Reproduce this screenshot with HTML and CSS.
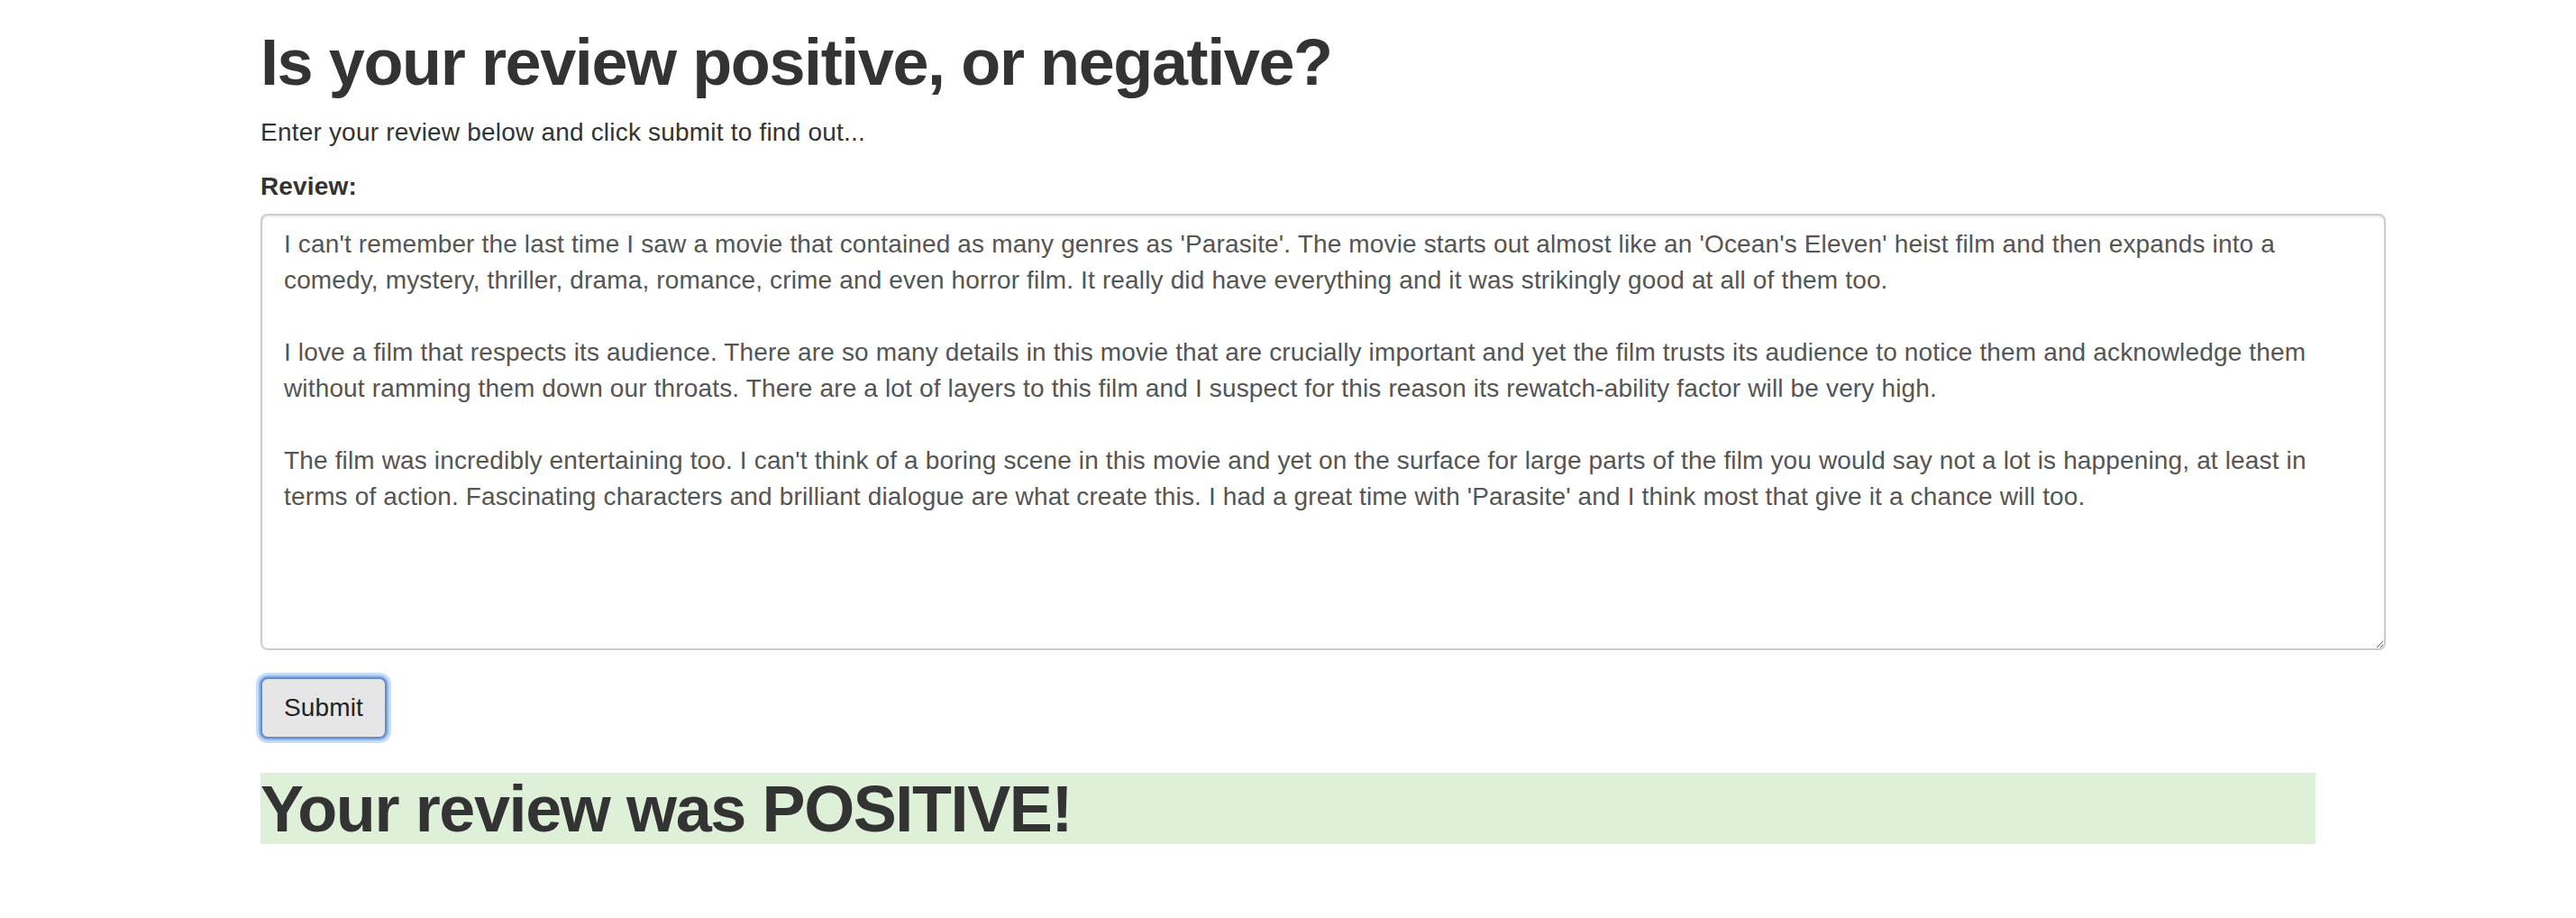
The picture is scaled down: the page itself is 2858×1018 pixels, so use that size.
FILE: index.html
```html
<!DOCTYPE html>
<html lang="en">
<head>
<meta charset="utf-8">
<title>Sentiment Analysis</title>
<link rel="stylesheet" href="styles.css">
</head>
<body>
<div class="container">
  <h1 class="title">Is your review positive, or negative?</h1>
  <p class="intro">Enter your review below and click submit to find out...</p>
  <form class="review-form">
    <div class="form-group">
      <label class="field-label" for="review">Review:</label>
      <textarea class="review-input" id="review" name="review">I can't remember the last time I saw a movie that contained as many genres as 'Parasite'. The movie starts out almost like an 'Ocean's Eleven' heist film and then expands into a
comedy, mystery, thriller, drama, romance, crime and even horror film. It really did have everything and it was strikingly good at all of them too.

I love a film that respects its audience. There are so many details in this movie that are crucially important and yet the film trusts its audience to notice them and acknowledge them
without ramming them down our throats. There are a lot of layers to this film and I suspect for this reason its rewatch-ability factor will be very high.

The film was incredibly entertaining too. I can't think of a boring scene in this movie and yet on the surface for large parts of the film you would say not a lot is happening, at least in
terms of action. Fascinating characters and brilliant dialogue are what create this. I had a great time with 'Parasite' and I think most that give it a chance will too.</textarea>
    </div>
    <button type="button" class="submit-btn">Submit</button>
  </form>
  <h1 class="result">Your review was POSITIVE!</h1>
</div>
</body>
</html>
```
FILE: styles.css
```css
html, body {
  margin: 0;
  padding: 0;
  background: #ffffff;
}

body {
  font-family: "Liberation Sans", Arial, Helvetica, sans-serif;
  font-size: 28px;
  line-height: 40px;
  letter-spacing: 0.15px;
  color: #333333;
}

.container {
  width: 2280px;
  margin: 0 auto;
}

.title {
  margin: 30px 0 18px;
  font-size: 72px;
  line-height: 79px;
  font-weight: bold;
  letter-spacing: -1.4px;
  color: #333333;
}

.intro {
  margin: 0 0 20px;
  letter-spacing: 0.2px;
}

.review-form {
  margin: 0;
}

.form-group {
  margin-bottom: 30px;
}

.field-label {
  display: block;
  font-weight: bold;
  margin-bottom: 10px;
}

.review-input {
  display: block;
  box-sizing: border-box;
  width: 2358px;
  height: 484px;
  margin: 0;
  padding: 12px 24px;
  border: 2px solid #cccccc;
  border-radius: 8px;
  box-shadow: inset 0 2px 2px rgba(0, 0, 0, 0.075);
  font-family: "Liberation Sans", Arial, Helvetica, sans-serif;
  font-size: 28px;
  line-height: 40px;
  letter-spacing: 0.15px;
  color: #555555;
  background: #ffffff;
  overflow: auto;
}

.submit-btn {
  display: block;
  box-sizing: border-box;
  height: 68px;
  margin: 0;
  padding: 0 24px;
  border: 2px solid #6a8cc4;
  border-radius: 8px;
  background: #e6e6e6;
  box-shadow: 0 0 0 2px #8db6f1, 0 0 0 5px #c6dcfb;
  font-family: "Liberation Sans", Arial, Helvetica, sans-serif;
  font-size: 28px;
  line-height: 40px;
  letter-spacing: 0.15px;
  color: #222222;
}

.result {
  margin: 38px 0 0;
  padding: 2px 0 0;
  font-size: 72px;
  line-height: 77px;
  font-weight: bold;
  letter-spacing: -1.4px;
  color: #333333;
  background: #dff0d8;
}
```
